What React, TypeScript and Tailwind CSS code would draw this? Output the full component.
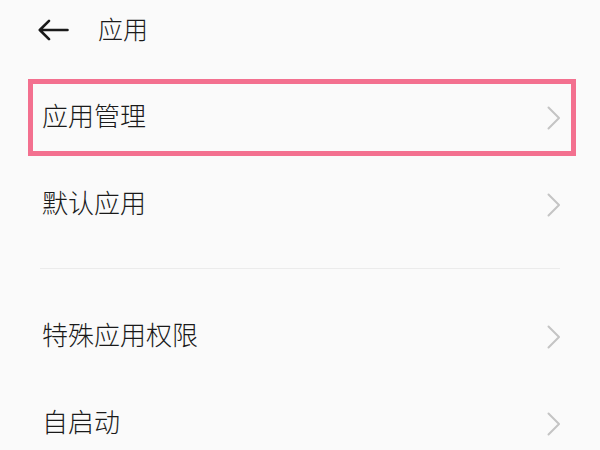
import React from "react";

const font = { fontFamily: '"Noto Sans CJK SC", "Noto Sans", sans-serif' };

function Chevron() {
  return (
    <svg width="14" height="24" viewBox="0 0 14 24" fill="none" className="shrink-0">
      <path d="M1.5 1.5 L12 12 L1.5 22.5" stroke="#c4c4c4" strokeWidth="2" strokeLinecap="round" strokeLinejoin="round" />
    </svg>
  );
}

function Label({ children }: { children: React.ReactNode }) {
  return <span className="text-[26px] leading-none font-light text-[#1a1a1a] pb-[6px]">{children}</span>;
}

function Row({ label, boxed }: { label: string; boxed?: boolean }) {
  if (boxed) {
    return (
      <div className="py-[5px]">
        <div className="ml-[28px] mr-[24px] h-[77px] border-[5px] border-[#f3708f] flex items-center justify-between pl-[9px] pr-[10px]">
          <Label>{label}</Label>
          <Chevron />
        </div>
      </div>
    );
  }
  return (
    <div className="h-[87px] flex items-center justify-between pl-[42px] pr-[39px]">
      <Label>{label}</Label>
      <Chevron />
    </div>
  );
}

export default function App() {
  return (
    <div className="w-[600px] h-[450px] overflow-hidden bg-[#fafafa]" style={font}>
      <div className="h-[62px] flex items-center pl-[38px] pb-[3px]">
        <svg width="31" height="22" viewBox="0 0 31 22" fill="none">
          <path d="M29.5 11 H2.5 M11 1.8 L1.8 11 L11 20.2" stroke="#1a1a1a" strokeWidth="2.6" strokeLinecap="round" strokeLinejoin="round" />
        </svg>
        <span className="ml-[29px] text-[25px] leading-none font-light text-[#1a1a1a] pb-[3px]">应用</span>
      </div>
      <div className="pt-[12px]">
        <Row label="应用管理" boxed />
        <Row label="默认应用" />
        <div className="pt-[20px] pb-[24px] pl-[40px] pr-[40px]">
          <div className="h-px bg-[#ebebeb]" />
        </div>
        <Row label="特殊应用权限" />
        <Row label="自启动" />
      </div>
    </div>
  );
}
